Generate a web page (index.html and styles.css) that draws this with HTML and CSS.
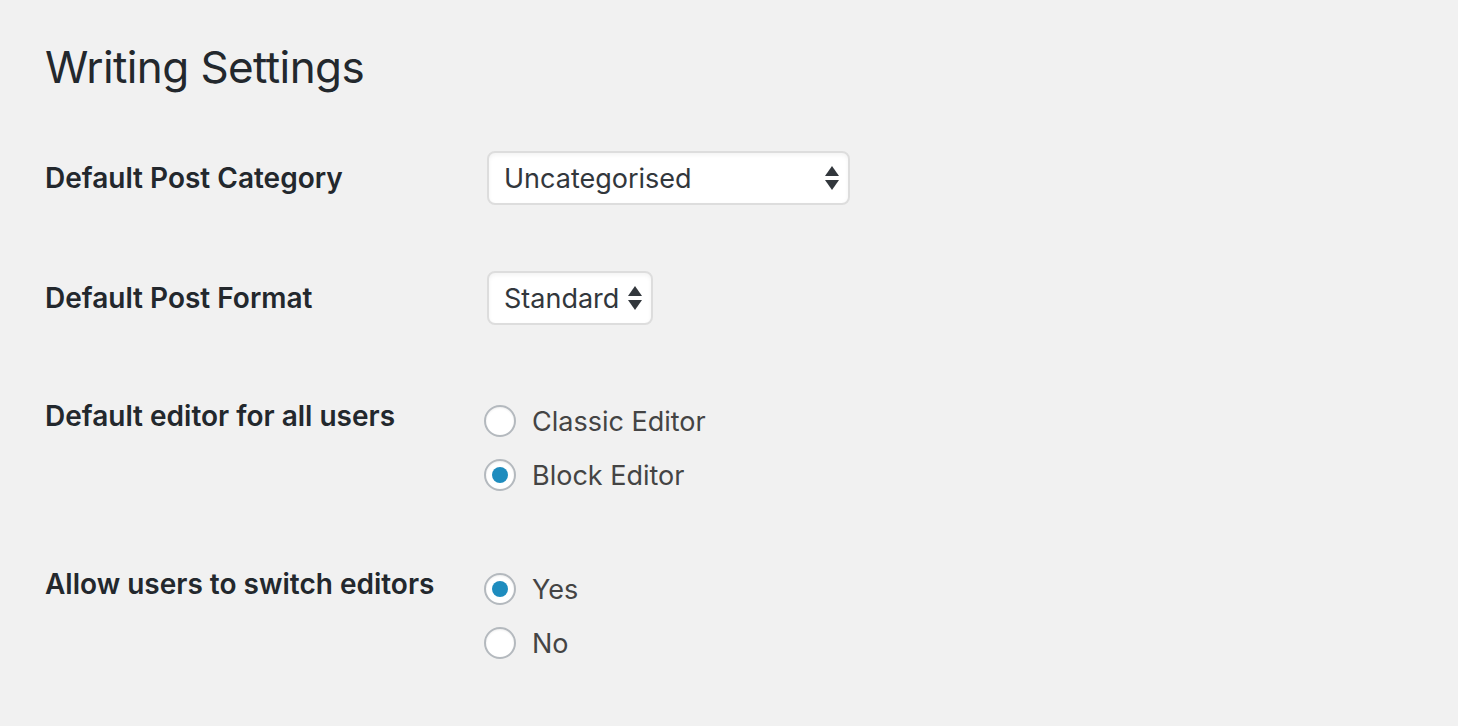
FILE: index.html
```html
<!DOCTYPE html>
<html lang="en">
<head>
    <meta charset="UTF-8">
    <title>Writing Settings</title>
    <link rel="stylesheet" href="styles.css">
</head>
<body>
    <div class="wrap">
        <h1>Writing Settings</h1>

        <div class="form-table">
            <!-- Category -->
            <div class="row">
                <div class="row-label">Default Post Category</div>
                <div class="row-field">
                    <div class="select select-wide">
                        <span>Uncategorised</span>
                        <svg class="arrows" width="16" height="28" viewBox="0 0 16 28">
                            <path d="M8 2 L15 12 L1 12 Z" />
                            <path d="M1 16 L15 16 L8 26 Z" />
                        </svg>
                    </div>
                </div>
            </div>

            <!-- Format -->
            <div class="row">
                <div class="row-label">Default Post Format</div>
                <div class="row-field">
                    <div class="select">
                        <span>Standard</span>
                        <svg class="arrows" width="16" height="28" viewBox="0 0 16 28">
                            <path d="M8 2 L15 12 L1 12 Z" />
                            <path d="M1 16 L15 16 L8 26 Z" />
                        </svg>
                    </div>
                </div>
            </div>

            <!-- Editor -->
            <div class="row row-radios">
                <div class="row-label">Default editor for all users</div>
                <div class="row-field">
                    <label class="radio"><span class="dot"></span>Classic Editor</label>
                    <label class="radio"><span class="dot checked"></span>Block Editor</label>
                </div>
            </div>

            <!-- Switching -->
            <div class="row row-radios">
                <div class="row-label">Allow users to switch editors</div>
                <div class="row-field">
                    <label class="radio"><span class="dot checked"></span>Yes</label>
                    <label class="radio"><span class="dot"></span>No</label>
                </div>
            </div>
        </div>
    </div>
</body>
</html>
```

FILE: styles.css
```css
* {
    margin: 0;
    padding: 0;
    box-sizing: border-box;
}

body {
    background-color: #f1f1f1;
    color: #23282d;
    font-family: Inter, "Noto Sans", sans-serif;
    height: 100vh;
    overflow: hidden;
}

.wrap {
    padding: 0 45px;
}

/* Page title */
h1 {
    font-size: 44px;
    font-weight: 400;
    line-height: 60px;
    margin-top: 37px;
    letter-spacing: -0.6px;
}

.form-table {
    margin-top: 21px;
}

.row {
    display: flex;
    align-items: center;
    padding: 33px 0;
}

.row-label {
    width: 442px;
    flex-shrink: 0;
    font-size: 28px;
    font-weight: 600;
    line-height: 40px;
}

/* Select boxes */
.select {
    display: inline-flex;
    align-items: center;
    justify-content: space-between;
    height: 54px;
    padding: 0 8px 0 15px;
    background: #fff;
    border: 2px solid #dddddd;
    border-radius: 8px;
    box-shadow: inset 0 2px 4px rgba(0, 0, 0, 0.05);
    font-size: 27px;
    color: #32373c;
    gap: 8px;
}

.select-wide {
    width: 363px;
}

.arrows {
    fill: #32373c;
}

/* Radio groups */
.row-radios {
    align-items: flex-start;
    padding: 36px 0 24px;
}

.row-radios .row-label {
    margin-top: 2px;
}

.radio {
    display: flex;
    align-items: center;
    height: 54px;
    margin-left: -3px;
    font-size: 27px;
    color: #444;
}

.dot {
    width: 32px;
    height: 32px;
    border: 2px solid #b4b9be;
    border-radius: 50%;
    background: #fff;
    margin-right: 16px;
    box-shadow: inset 0 1px 2px rgba(0, 0, 0, 0.07);
    display: flex;
    align-items: center;
    justify-content: center;
}

.dot.checked::after {
    content: "";
    width: 16px;
    height: 16px;
    border-radius: 50%;
    background: #1e8cbe;
}
```
